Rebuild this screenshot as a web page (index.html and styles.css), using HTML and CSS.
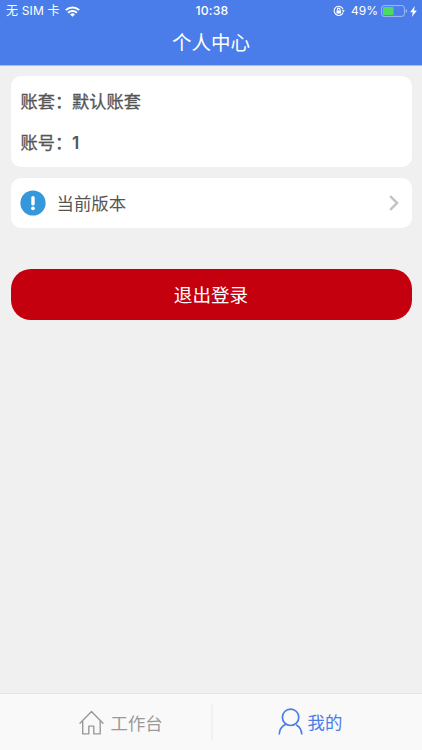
FILE: index.html
```html
<!DOCTYPE html>
<html lang="zh-CN">
<head>
<meta charset="utf-8">
<title>个人中心</title>
<link rel="stylesheet" href="styles.css">
</head>
<body>
<header class="header">
  <div class="status">
    <div class="status-left">
      <span>无 SIM 卡</span>
      <svg class="wifi" viewBox="0 0 15 11" width="15" height="11" fill="none" stroke="#fff" stroke-width="2">
        <path d="M.8 4.1a9.7 9.7 0 0 1 13.4 0M3.1 6.7a6.4 6.4 0 0 1 8.8 0"/>
        <path d="M7.5 10.7 5.1 8.4a3.6 3.6 0 0 1 4.8 0z" fill="#fff" stroke="none"/>
      </svg>
    </div>
    <span class="time">10:38</span>
    <div class="status-right">
      <svg class="lock" viewBox="0 0 12 12" width="12" height="12" fill="none" stroke="#fff" stroke-width="1.1">
        <path d="M10.1 7.3A4.6 4.6 0 1 1 10.1 4.4"/>
        <path d="M8.5 5.2h3.4l-1.6 2.1z" fill="#fff" stroke="none"/>
        <path d="M3.5 5.4h4.4v3.2H3.5z" fill="#fff" stroke="none"/>
        <path d="M4.4 5.6V4.4a1.3 1.3 0 0 1 2.6 0v1.2"/>
      </svg>
      <span class="percent">49%</span>
      <svg class="battery" viewBox="0 0 27 12" width="27" height="12">
        <rect x=".6" y=".6" width="22.8" height="10.8" rx="2.6" fill="none" stroke="#a3bdf4"/>
        <rect x="2" y="2" width="10.6" height="8" rx="1" fill="#4cd964"/>
        <path d="M24.7 4v4q1.5-.7 1.5-2t-1.5-2z" fill="#a3bdf4"/>
      </svg>
      <svg class="bolt" viewBox="0 0 7 11" width="7" height="11"><path d="M4.8 0 .1 6.2h2.7L1.9 11l5-6.6H4z" fill="#fff"/></svg>
    </div>
  </div>
  <h1 class="title">个人中心</h1>
</header>
<main class="content">
  <section class="card account">
    <div class="row">账套：默认账套</div>
    <div class="row">账号：<span class="number">1</span></div>
  </section>
  <section class="card version">
    <svg class="info" viewBox="0 0 26 26" width="26" height="26">
      <circle cx="13" cy="13" r="12.6" fill="#3498db"/>
      <path d="M13 7.6v6.3" stroke="#fff" stroke-width="3.4" stroke-linecap="round"/>
      <circle cx="13" cy="18.3" r="1.9" fill="#fff"/>
    </svg>
    <span class="version-text">当前版本</span>
    <svg viewBox="0 0 10 16" width="10" height="16" fill="none" stroke="#c4c4c8" stroke-width="2.5"><path d="M1.2 1.2 8.1 8l-6.9 6.8"/></svg>
  </section>
  <button class="logout">退出登录</button>
</main>
<nav class="tabs">
  <div class="tab">
    <svg viewBox="0 0 25 25" width="25" height="25" fill="none" stroke="#999" stroke-width="1.4" stroke-linejoin="round" stroke-linecap="round">
      <path d="M1 13.2 12.5 1.6 24 13.2M3.7 10.8v13.1h6.1v-7.8h5v7.8h6.4V10.8"/>
    </svg>
    <span>工作台</span>
  </div>
  <div class="tab active">
    <svg viewBox="0 0 25 27" width="25" height="27" fill="none" stroke="#4a7de8" stroke-width="1.7" stroke-linecap="round">
      <circle cx="12.6" cy="9.3" r="8.2"/>
      <path d="M7.9 16.3C4 18.2 1.5 21.4 1.3 25.8M18.8 17.2c3.1 2 4.7 5 4.9 8.6"/>
    </svg>
    <span class="mine">我的</span>
  </div>
</nav>
</body>
</html>
```

FILE: styles.css
```css
* { box-sizing: border-box; }
body {
  margin: 0;
  height: 750px;
  display: flex;
  flex-direction: column;
  overflow: hidden;
  background: #f0f0f0;
  font-family: "Noto Sans CJK SC", sans-serif;
  color: #555;
}
.header {
  height: 66px;
  background: #4a7dea;
  border-bottom: 1px solid #a4bdf2;
  color: #fff;
}
.status {
  height: 22px;
  padding: 0 5px 0 6px;
  display: grid;
  grid-template-columns: 1fr auto 1fr;
  align-items: center;
  font: 12px/22px Inter, "Noto Sans CJK SC", sans-serif;
}
.status-left, .status-right { display: flex; align-items: center; }
.status-left { letter-spacing: .15px; }
.status-right { justify-content: flex-end; }
.wifi { margin-left: 5px; }
.time { font-weight: 500; font-size: 12.2px; letter-spacing: .2px; padding-left: 1px; }
.percent { margin: 0 3px 0 6px; font-size: 12px; }
.bolt { margin-left: 2px; }
.title {
  margin: 0;
  text-align: center;
  font-size: 19.5px;
  line-height: 39px;
  font-weight: 400;
}
.content { flex: 1; padding: 10px 10.5px; }
.card { background: #fff; border-radius: 10px; }
.account { height: 91px; padding: 4px 10px; margin-bottom: 11px; }
.row {
  height: 41px;
  line-height: 41px;
  font-size: 17.2px;
  -webkit-text-stroke: .3px;
}
.number {
  font-family: Inter, sans-serif;
  font-weight: 600;
  -webkit-text-stroke: 0;
}
.version {
  height: 50px;
  padding: 0 12.5px 0 9.5px;
  display: flex;
  align-items: center;
}
.version-text { flex: 1; margin-left: 10.5px; font-size: 17.4px; line-height: 50px; }
.logout {
  display: block;
  width: 100%;
  height: 51px;
  margin-top: 41px;
  padding: 0 0 2px;
  border: 0;
  border-radius: 20px;
  background: #c4000f;
  color: #fff;
  font: 18.6px/49px "Noto Sans CJK SC", sans-serif;
}
.tabs {
  height: 57px;
  display: flex;
  align-items: center;
  background: #f9f9f9;
  border-top: 1px solid #e4e4e4;
  font-size: 17.4px;
  color: #999;
}
.tab {
  width: 211px;
  height: 36px;
  display: flex;
  align-items: center;
  gap: 7px;
  padding-left: 78.5px;
}
.active {
  gap: 5px;
  padding-left: 64.5px;
  border-left: 2px solid #f1f1f1;
  color: #4a7de8;
}
.active svg { margin-top: -2px; }
.mine { margin-top: -2px; }
```
